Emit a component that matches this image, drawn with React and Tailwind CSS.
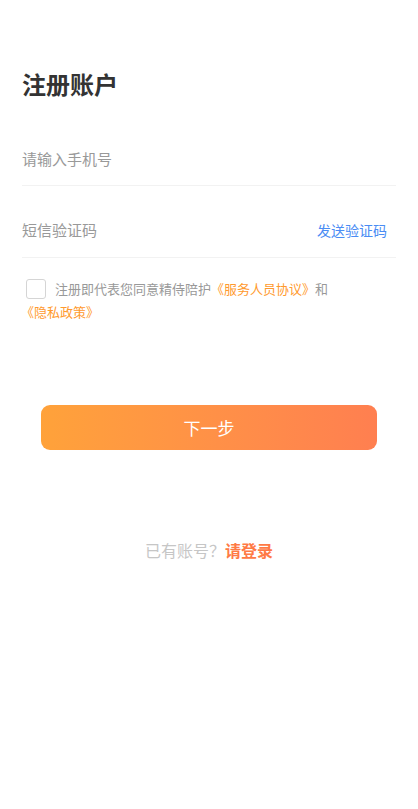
import React from 'react';

const App = () => {
  return (
    <div
      className="min-h-[809px] w-full bg-white"
      style={{ fontFamily: '"Noto Sans CJK SC", "Noto Sans", sans-serif' }}
    >
      <div className="px-[22px] pt-[66px]">
        {/* title */}
        <h1 className="text-[24px] font-bold leading-[36px] text-[#333333]">注册账户</h1>

        {/* phone */}
        <div className="mt-[36px] h-[48px] border-b border-[#f2f2f2] pt-[8px]">
          <span className="text-[15px] leading-[22px] text-[#999999]">请输入手机号</span>
        </div>

        {/* sms code */}
        <div className="mt-[25px] flex h-[47px] items-start justify-between border-b border-[#f2f2f2] pr-[9px] pt-[8px]">
          <span className="text-[15px] leading-[22px] text-[#999999]">短信验证码</span>
          <span className="text-[14px] leading-[22px] text-[#4a8cf4]">发送验证码</span>
        </div>

        {/* agreement */}
        <div className="mt-[19px] text-[13px] leading-[23px] text-[#999999]">
          <div className="flex items-center">
            <span className="ml-[4px] mr-[9px] inline-block h-[20px] w-[20px] rounded-[3px] border border-[#d5d5d5]"></span>
            <span>注册即代表您同意精侍陪护</span>
            <span className="text-[#ff9a2e]">《服务人员协议》</span>
            <span>和</span>
          </div>
          <div className="-ml-[1px] text-[#ff9a2e]">《隐私政策》</div>
        </div>
      </div>

      {/* next button */}
      <div className="mt-[82px] px-[41px]">
        <button className="flex h-[45px] w-full items-center justify-center rounded-[9px] bg-gradient-to-r from-[#ffa23a] to-[#ff7f50] text-[17px] text-white">
          下一步
        </button>
      </div>

      {/* login */}
      <div className="mt-[88px] flex justify-center text-[16px]">
        <span className="text-[#c6c6c6]">已有账号？</span>
        <span className="font-bold text-[#ff7a45]">请登录</span>
      </div>
    </div>
  );
};

export default App;
